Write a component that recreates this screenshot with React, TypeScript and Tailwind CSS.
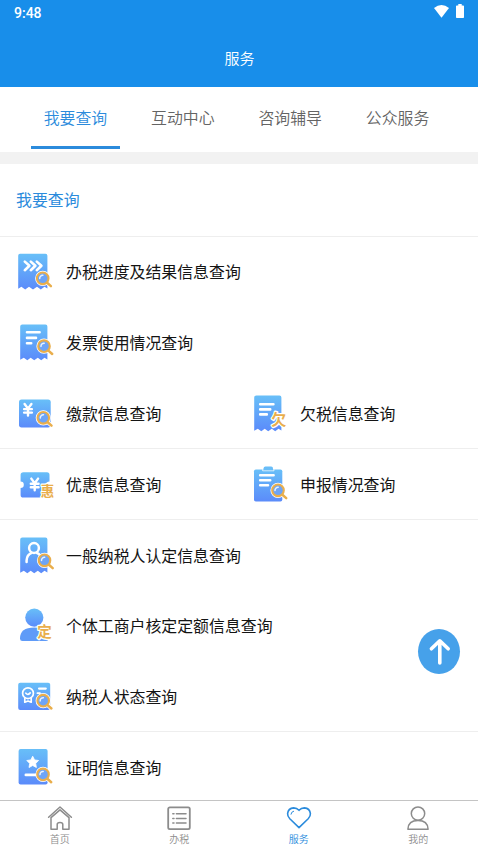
import React from 'react';
import clsx from 'clsx';

const GOLD = '#e9ae4c';
const BLUE = 'url(#iconBlue)';

const RECEIPT =
  'M8.3 3.6H31.5Q33.4 3.6 33.4 5.5V38.5L30.5 36.8L27.2 39.2L23.8 36.8L20.2 39.2L16.7 36.8L13.3 39.2L9.8 36.8L6.2 38.7V5.5Q6.2 3.6 8.3 3.6Z';

function Magnifier({ x, y }: { x: number; y: number }) {
  return (
    <g transform={`translate(${x} ${y})`} strokeLinecap="round">
      <path d="M4.4 4.4L8.2 7.8" stroke="#fff" strokeWidth="4" />
      <circle r="6" fill="#5c97f4" stroke="#fff" strokeWidth="3.2" />
      <path d="M4.4 4.4L8.2 7.8" stroke={GOLD} strokeWidth="2.5" />
      <circle r="5.8" fill="#6da4f7" stroke={GOLD} strokeWidth="2.1" />
      <path d="M-3 0.2A3 3 0 0 1 0.2 -3" fill="none" stroke="#e8f3ff" strokeWidth="1.5" />
    </g>
  );
}

function Lines({ d }: { d: string }) {
  return <path d={d} fill="none" stroke="#fff" strokeWidth="2.6" strokeLinecap="round" strokeLinejoin="round" />;
}

function Badge({ x, y, size, children }: { x: number; y: number; size: number; children: string }) {
  return (
    <text
      x={x}
      y={y}
      fontSize={size}
      textAnchor="middle"
      fill={GOLD}
      stroke="#fff"
      strokeWidth="2.6"
      strokeLinejoin="round"
      paintOrder="stroke"
      className="font-bold"
    >
      {children}
    </text>
  );
}

function Yen({ x, y }: { x: number; y: number }) {
  return (
    <path
      transform={`translate(${x} ${y})`}
      d="M-3.4 -5.6L0 -1L3.4 -5.6M0 -1V6M-3.9 -0.5H3.9M-3.9 3H3.9"
      fill="none"
      stroke="#fff"
      strokeWidth="2.4"
      strokeLinecap="round"
    />
  );
}

const icons: Record<string, React.ReactNode> = {
  progress: (
    <>
      <path
        d="M6 3.8H31.5Q33.4 3.8 33.4 5.7V38.5L30.5 36.8L26.8 39.4L23 36.8L19 39.4L15 36.8L11.2 39.4L7.4 36.8L4.2 38.7V5.7Q4.2 3.8 6 3.8Z"
        fill={BLUE}
      />
      <path
        d="M10.8 11.6L15.4 15.8L10.8 20.2M16.8 11.6L21.4 15.8L16.8 20.2M22.8 11.6L27.4 15.8L22.8 20.2"
        fill="none"
        stroke="#fff"
        strokeWidth="2.6"
        strokeLinecap="round"
        strokeLinejoin="round"
      />
      <Magnifier x={28.7} y={28.3} />
    </>
  ),
  invoice: (
    <>
      <path d={RECEIPT} fill={BLUE} />
      <Lines d="M13 11.3H25.6M13 16.9H22M13 22.3H17.2" />
      <Magnifier x={30} y={25.2} />
    </>
  ),
  payment: (
    <>
      <rect x="5" y="7.6" width="31.7" height="27.8" rx="2.6" fill={BLUE} />
      <Yen x={14} y={17.6} />
      <Magnifier x={29.3} y={25.8} />
    </>
  ),
  arrears: (
    <>
      <path d={RECEIPT} fill={BLUE} />
      <Lines d="M12.2 12.3H25.4M12.2 17.4H22.2M12.2 22.4H18.8" />
      <Badge x={30.8} y={33.2} size={15}>欠</Badge>
    </>
  ),
  discount: (
    <>
      <path
        d="M9.4 9.2H33Q35.5 9.2 35.5 11.7V18.6A3.2 3.2 0 0 0 35.5 25V32Q35.5 34.6 33 34.6H9.4Q6.6 34.6 6.6 32V25A3.2 3.2 0 0 0 6.6 18.6V11.7Q6.6 9.2 9.4 9.2Z"
        fill={BLUE}
      />
      <Yen x={20.7} y={21.2} />
      <Badge x={33.6} y={33.4} size={13.5}>惠</Badge>
    </>
  ),
  declare: (
    <>
      <rect x="15.6" y="3.4" width="9.4" height="6" rx="1.8" fill="#69bdf8" />
      <rect x="6" y="6.4" width="28.3" height="32.2" rx="1.8" fill={BLUE} />
      <path d="M14.6 6.2V7.8H26V6.2" fill="none" stroke="#fff" strokeWidth="0.7" />
      <Lines d="M12.2 12.3H25.6M12.2 17.3H22.2M12.2 22.3H20" />
      <Magnifier x={30} y={27.3} />
    </>
  ),
  taxpayer: (
    <>
      <path d={RECEIPT} fill={BLUE} />
      <circle cx="20" cy="14" r="4.9" fill="none" stroke="#fff" strokeWidth="2.5" />
      <path
        d="M12.6 28V26.4Q12.8 21 17.6 18.9M22.6 18.7Q25.2 19.6 26.4 22"
        fill="none"
        stroke="#fff"
        strokeWidth="2.5"
        strokeLinecap="round"
      />
      <Magnifier x={30.5} y={26.3} />
    </>
  ),
  individual: (
    <>
      <circle cx="20.3" cy="13.6" r="9.1" fill={BLUE} />
      <path d="M6 34.5Q6 23.6 20.2 23.6Q34 23.6 34.4 34.5Q34.4 37 32 37H8.4Q6 37 6 34.5Z" fill="#5f9bf8" />
      <Badge x={30.4} y={33.2} size={14.5}>定</Badge>
    </>
  ),
  status: (
    <>
      <rect x="4.2" y="7.7" width="32" height="27.3" rx="2" fill={BLUE} />
      <g fill="none" stroke="#fff" strokeWidth="1.7" strokeLinecap="round" strokeLinejoin="round">
        <path d="M10.8 23.2V27.2L14 26L17.2 27.2V23.2" />
        <circle cx="14" cy="18.2" r="5.4" />
        <path d="M11.9 18.2Q14 20.6 16.2 17.9" />
        <path d="M25 13.6H31.8" strokeWidth="2.1" />
        <path d="M23.4 18.2H26" />
      </g>
      <Magnifier x={29.2} y={25.7} />
    </>
  ),
  certificate: (
    <>
      <rect x="4.6" y="3" width="29" height="35.4" rx="2" fill={BLUE} />
      <path
        d="M18.7 10.2L20.6 13.9L24.6 14.5L21.7 17.4L22.4 21.5L18.7 19.5L15 21.5L15.7 17.4L12.8 14.5L16.8 13.9Z"
        fill="#fff"
        stroke="#fff"
        strokeWidth="0.8"
        strokeLinejoin="round"
      />
      <Lines d="M11.8 28.9H22" />
      <Magnifier x={29} y={28.4} />
    </>
  ),
};

const tabs = ['我要查询', '互动中心', '咨询辅导', '公众服务'];

const rows = [
  { items: [{ icon: 'progress', label: '办税进度及结果信息查询' }] },
  { items: [{ icon: 'invoice', label: '发票使用情况查询' }] },
  {
    items: [
      { icon: 'payment', label: '缴款信息查询' },
      { icon: 'arrears', label: '欠税信息查询' },
    ],
    divider: true,
  },
  {
    items: [
      { icon: 'discount', label: '优惠信息查询' },
      { icon: 'declare', label: '申报情况查询' },
    ],
    divider: true,
  },
  { items: [{ icon: 'taxpayer', label: '一般纳税人认定信息查询' }] },
  { items: [{ icon: 'individual', label: '个体工商户核定定额信息查询' }] },
  { items: [{ icon: 'status', label: '纳税人状态查询' }], divider: true },
  { items: [{ icon: 'certificate', label: '证明信息查询' }] },
];

const navItems = [
  {
    label: '首页',
    icon: (
      <>
        <path d="M1.6 12.2L13 2L24.4 12.2" />
        <path d="M4 12.6V24.2H10.2V19.4Q10.2 17.6 13 17.6Q15.8 17.6 15.8 19.4V24.2H22V12.6L13 4.9Z" />
      </>
    ),
  },
  {
    label: '办税',
    icon: (
      <>
        <rect x="2.2" y="2.4" width="21.6" height="21.8" rx="1.6" strokeWidth="1.8" />
        <path d="M10.4 8.8H20M10.4 13.4H20M10.4 18H20M6.8 8.8H8M6.8 13.4H8M6.8 18H8" />
      </>
    ),
  },
  {
    label: '服务',
    active: true,
    icon: (
      <>
        <path d="M13 22.6L3.8 13.7Q1.4 11.2 1.6 8.6Q2.2 3.2 7.6 2.9Q10.8 3 13 5.3Q15.2 3 18.4 2.9Q23.8 3.2 24.4 8.6Q24.6 11.2 22.2 13.7Z" strokeWidth="1.6" />
        <path d="M5 9.2Q5.2 6.7 7.6 6.2" strokeWidth="1" />
      </>
    ),
  },
  {
    label: '我的',
    icon: (
      <>
        <circle cx="13" cy="8.6" r="6.7" />
        <path d="M2.9 24.2Q3.3 15.6 13 15.6Q22.7 15.6 23.1 24.2Z" />
      </>
    ),
  },
];

function Header() {
  return (
    <header className="h-[87px] shrink-0 bg-[#188eea] text-white">
      <div className="flex h-[26px] items-center justify-between pl-3.5 pr-3.5">
        <span className="font-[Roboto] text-[14px] leading-none font-medium">9:48</span>
        <div className="flex items-start gap-[7px] pb-1">
          <svg className="mt-px" width="15" height="13" viewBox="0 0 15 13" fill="currentColor">
            <path d="M0 3Q7.5 -3 15 3L7.5 12.7Z" />
          </svg>
          <svg width="8" height="14" viewBox="0 0 8 14" fill="currentColor">
            <path d="M2.3 0H5.7V1.4H7.2Q8 1.4 8 2.2V13.2Q8 14 7.2 14H0.8Q0 14 0 13.2V2.2Q0 1.4 0.8 1.4H2.3Z" />
          </svg>
        </div>
      </div>
      <h1 className="flex h-[63px] items-center justify-center pt-px pl-px text-[15px] font-[350]">服务</h1>
    </header>
  );
}

function Tabs() {
  return (
    <nav className="flex h-[65px] shrink-0 pr-[26.8px] pl-[21.8px]">
      {tabs.map((tab, i) => (
        <button
          key={tab}
          className={clsx(
            'flex flex-1 flex-col items-center text-[15.9px] font-[350]',
            i === 0 ? 'text-[#2b8bdc]' : 'text-[#646464]'
          )}
        >
          <span className="flex h-[59px] items-center pt-[3px]">{tab}</span>
          {i === 0 && <span className="h-[3px] w-[89px] bg-[#2b8bdc]" />}
        </button>
      ))}
    </nav>
  );
}

function QueryList() {
  return (
    <section className="flex-1 overflow-hidden">
      <h2 className="flex h-[72.6px] items-center border-b border-[#eeeeee] px-4 text-[15.9px] text-[#2b8bdc]">
        我要查询
      </h2>
      {rows.map((row) => (
        <div
          key={row.items[0].label}
          className={clsx('flex h-[70.8px] border-b pt-[1.8px]', row.divider ? 'border-[#eeeeee]' : 'border-transparent')}
        >
          {row.items.map((item) => (
            <div key={item.label} className={clsx('flex items-center pl-3.5', row.items.length > 1 && 'w-[234px]')}>
              <svg className="h-11 w-11 shrink-0" viewBox="0 0 44 44">
                {icons[item.icon]}
              </svg>
              <span className="ml-2 text-[15.9px] whitespace-nowrap text-[#141414]">{item.label}</span>
            </div>
          ))}
        </div>
      ))}
    </section>
  );
}

function BottomNav() {
  return (
    <nav className="flex h-[51px] shrink-0 border-t border-[#c4c4c4] bg-white">
      {navItems.map((item) => (
        <button
          key={item.label}
          className={clsx(
            'flex flex-1 flex-col items-center pt-1 text-[10px] leading-[14px] font-[350]',
            item.active ? 'text-[#2b8bdc]' : 'text-[#8c8c8c]'
          )}
        >
          <svg
            className="h-[26px] w-[26px]"
            viewBox="0 0 26 26"
            fill="none"
            stroke="currentColor"
            strokeWidth="1.5"
            strokeLinejoin="round"
            strokeLinecap="round"
          >
            {item.icon}
          </svg>
          <span className="pt-px">{item.label}</span>
        </button>
      ))}
    </nav>
  );
}

function App() {
  return (
    <div className="relative flex h-[851px] w-[478px] flex-col overflow-hidden bg-white font-['Noto_Sans_CJK_SC',sans-serif]">
      <svg className="absolute h-0 w-0">
        <defs>
          <linearGradient id="iconBlue" x1="0" y1="0" x2="0" y2="1">
            <stop offset="0" stopColor="#68bff8" />
            <stop offset="1" stopColor="#5b8bfa" />
          </linearGradient>
        </defs>
      </svg>
      <Header />
      <Tabs />
      <div className="h-3 shrink-0 bg-[#f2f2f2]" />
      <QueryList />
      <BottomNav />
      <button className="absolute top-[629px] left-[418px] flex h-[45px] w-[42px] items-center justify-center rounded-[50%] bg-[#46a1ea]">
        <svg
          width="24"
          height="28"
          viewBox="0 0 24 28"
          fill="none"
          stroke="#fff"
          strokeWidth="3.6"
          strokeLinecap="round"
          strokeLinejoin="round"
        >
          <path d="M12.8 25V3.4M4.4 10.8L12.8 2.8L21.2 10.8" />
        </svg>
      </button>
    </div>
  );
}

export default App;
